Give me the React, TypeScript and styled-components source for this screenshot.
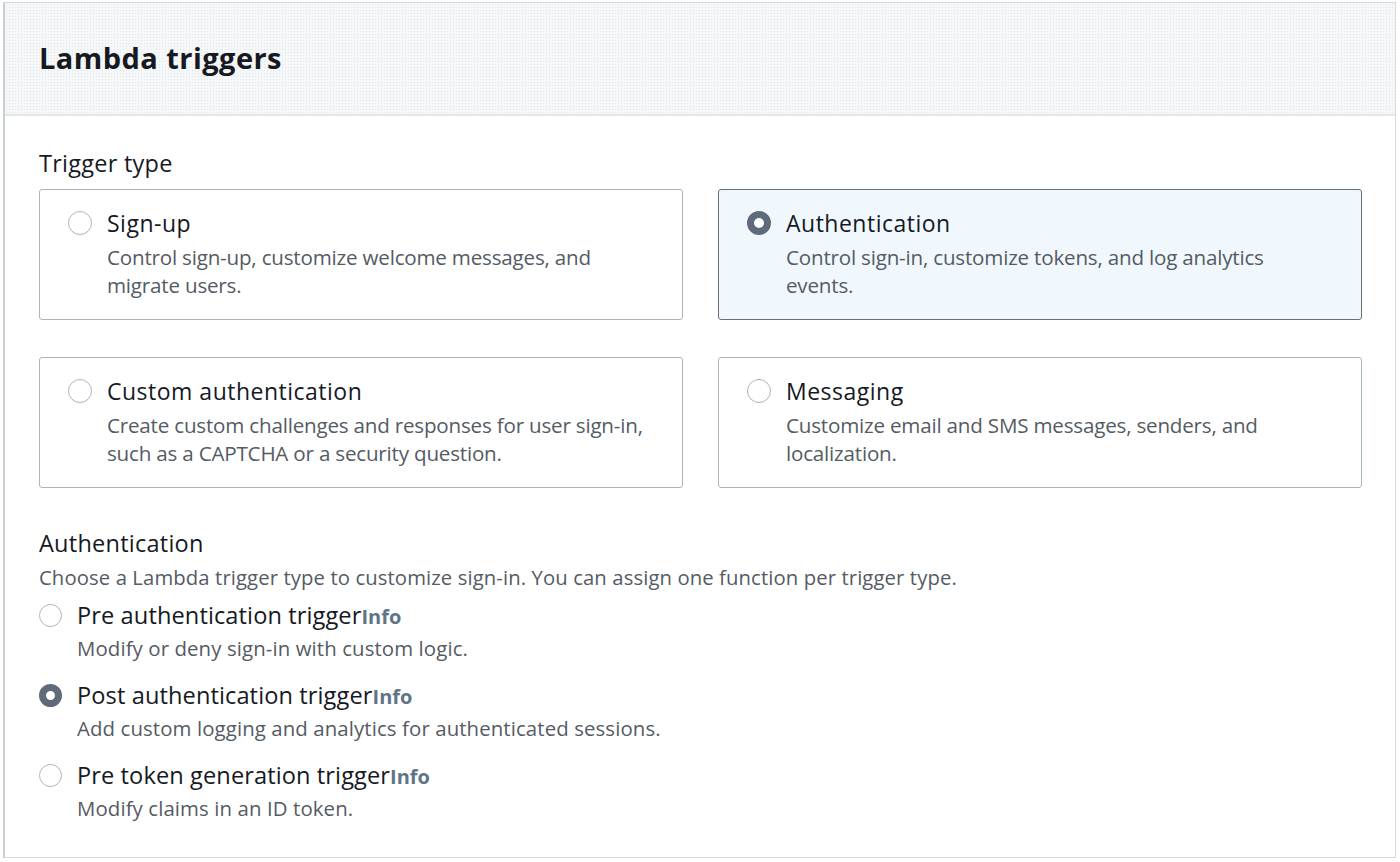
import React from "react";
import styled, { createGlobalStyle } from "styled-components";

const Global = createGlobalStyle`
  html, body { margin: 0; padding: 0; background: #ffffff; }
  body { font-family: "Open Sans", "Noto Sans", sans-serif; color: #16191f; }
  * { box-sizing: border-box; }
`;

const Page = styled.div`
  width: 1400px;
  height: 862px;
  padding: 2px 4px 4px 3px;
`;

const Panel = styled.section`
  height: 856px;
  border: 1px solid #d5dbdb;
  border-left: 2px solid #c9d0d2;
  background: #ffffff;
`;

const Header = styled.header`
  height: 113px;
  background-color: #f5f7f8;
  background-image: radial-gradient(#e0e7ea 0.8px, transparent 0.9px);
  background-size: 3px 3px;
  border-bottom: 2px solid #e3e7e8;
  padding: 36px 0 0 34px;
`;

const Title = styled.h2`
  margin: 0;
  font-size: 29px;
  line-height: 38px;
  font-weight: 700;
  color: #16191f;
  letter-spacing: 0.45px;
`;

const Body = styled.div`
  padding: 32px 34px 0 34px;
`;

const Label = styled.div`
  font-size: 23.5px;
  line-height: 30px;
  color: #16191f;
  letter-spacing: 0.25px;
`;

const Grid = styled.div`
  margin-top: 11px;
  display: grid;
  grid-template-columns: 644px 644px;
  column-gap: 35px;
  row-gap: 37px;
`;

const Card = styled.div<{ $selected?: boolean }>`
  height: 131px;
  border: 1px solid ${(p) => (p.$selected ? "#687078" : "#aab7b8")};
  border-radius: 3px;
  background: ${(p) => (p.$selected ? "#f1f8fd" : "#ffffff")};
  padding: 19px 20px 0 28px;
  display: flex;
  gap: 15px;
`;

const Radio = styled.span<{ $checked?: boolean }>`
  flex: none;
  width: 24px;
  height: 24px;
  border-radius: 50%;
  margin-top: 2px;
  border: ${(p) => (p.$checked ? "7px solid #5f6b7a" : "1.5px solid #aab7b8")};
  background: #ffffff;
`;

const CardText = styled.div`
  display: flex;
  flex-direction: column;
  max-width: 540px;
`;

const CardTitle = styled.div`
  font-size: 23px;
  line-height: 28px;
  color: #16191f;
  letter-spacing: 0.5px;
`;

const CardDesc = styled.div`
  margin-top: 6px;
  font-size: 20.6px;
  line-height: 28px;
  color: #545b64;
  letter-spacing: -0.2px;
`;

const Section = styled.div`
  margin-top: 40px;
`;

const SectionHint = styled.div`
  margin-top: 5px;
  font-size: 20.3px;
  line-height: 28px;
  color: #545b64;
  letter-spacing: 0.1px;
`;

const Options = styled.div`
  margin-top: 9px;
  display: flex;
  flex-direction: column;
  gap: 18px;
`;

const Option = styled.div`
  display: flex;
  gap: 15px;
`;

const OptionRadio = styled(Radio)`
  margin-top: 4px;
  width: 23px;
  height: 23px;
`;

const OptionText = styled.div`
  display: flex;
  flex-direction: column;
`;

const OptionLabel = styled.div`
  font-size: 23.6px;
  line-height: 30px;
  color: #16191f;
  letter-spacing: 0.1px;
`;

const Info = styled.span`
  font-size: 20px;
  line-height: 1;
  font-weight: 700;
  color: #5f7486;
  letter-spacing: 0;
`;

const OptionDesc = styled.div`
  margin-top: 4px;
  font-size: 20.4px;
  line-height: 28px;
  color: #545b64;
  letter-spacing: 0.1px;
`;

const cards = [
  { title: "Sign-up", desc: "Control sign-up, customize welcome messages, and migrate users.", selected: false },
  { title: "Authentication", desc: "Control sign-in, customize tokens, and log analytics events.", selected: true },
  { title: "Custom authentication", desc: "Create custom challenges and responses for user sign-in, such as a CAPTCHA or a security question.", selected: false },
  { title: "Messaging", desc: "Customize email and SMS messages, senders, and localization.", selected: false },
];

const options = [
  { label: "Pre authentication trigger", desc: "Modify or deny sign-in with custom logic.", checked: false },
  { label: "Post authentication trigger", desc: "Add custom logging and analytics for authenticated sessions.", checked: true },
  { label: "Pre token generation trigger", desc: "Modify claims in an ID token.", checked: false },
];

export default function App() {
  return (
    <Page>
      <Global />
      <Panel>
        <Header>
          <Title>Lambda triggers</Title>
        </Header>
        <Body>
          <Label>Trigger type</Label>
          <Grid>
            {cards.map((c) => (
              <Card key={c.title} $selected={c.selected}>
                <Radio $checked={c.selected} />
                <CardText>
                  <CardTitle>{c.title}</CardTitle>
                  <CardDesc>{c.desc}</CardDesc>
                </CardText>
              </Card>
            ))}
          </Grid>
          <Section>
            <Label>Authentication</Label>
            <SectionHint>
              Choose a Lambda trigger type to customize sign-in. You can assign one function per trigger type.
            </SectionHint>
            <Options>
              {options.map((o) => (
                <Option key={o.label}>
                  <OptionRadio $checked={o.checked} />
                  <OptionText>
                    <OptionLabel>
                      {o.label}
                      <Info>Info</Info>
                    </OptionLabel>
                    <OptionDesc>{o.desc}</OptionDesc>
                  </OptionText>
                </Option>
              ))}
            </Options>
          </Section>
        </Body>
      </Panel>
    </Page>
  );
}
